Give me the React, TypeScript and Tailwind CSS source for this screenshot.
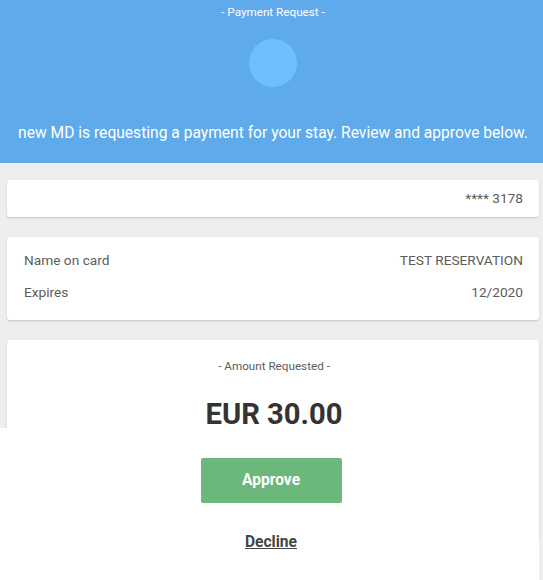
import React from "react";

export default function App() {
  return (
    <div className="relative min-h-[580px] bg-[#eeeeee] font-['Roboto',sans-serif] overflow-hidden">
      <div className="h-[163px] bg-[#5faaeb] flex flex-col items-center text-white pl-[3px]">
        <div className="pt-[5px] text-[11.7px] leading-[14px]">- Payment Request -</div>
        <div className="mt-[20px] w-[48px] h-[48px] rounded-full bg-[#6ebffc]" />
        <div className="mt-[36px] text-[15.6px] leading-[20px]">
          new MD is requesting a payment for your stay. Review and approve below.
        </div>
      </div>
      <div className="pt-[17px] ml-[7px] mr-[4px] flex flex-col gap-[20px]">
        <div className="h-[37px] bg-white rounded-[3px] shadow-[0_1px_2px_rgba(0,0,0,0.18)] flex items-center justify-end pr-[16px] text-[13.7px] text-[#5c5c5c]">
          **** 3178
        </div>
        <div className="bg-white rounded-[3px] shadow-[0_1px_2px_rgba(0,0,0,0.18)] pt-[7px] pb-[12px] pl-[17px] pr-[16px] text-[13.7px] text-[#5c5c5c]">
          <div className="flex justify-between leading-[32px]">
            <span>Name on card</span>
            <span>TEST RESERVATION</span>
          </div>
          <div className="flex justify-between leading-[32px]">
            <span>Expires</span>
            <span>12/2020</span>
          </div>
        </div>
        <div className="h-[200px] bg-white rounded-[3px] shadow-[0_1px_2px_rgba(0,0,0,0.18)] flex flex-col items-center pt-[18px] pl-[2px]">
          <div className="text-[11.7px] leading-[16px] text-[#5c5c5c]">- Amount Requested -</div>
          <div className="mt-[22px] text-[29.2px] leading-[36px] font-bold text-[#333333]">EUR 30.00</div>
        </div>
      </div>
      <div className="absolute left-0 right-[4px] top-[428px] bottom-0 bg-white flex flex-col items-center pl-[3px]">
        <button className="mt-[30px] w-[141px] h-[45px] rounded-[2px] bg-[#6cb77a] text-white text-[15.6px] font-bold">
          Approve
        </button>
        <a className="mt-[29px] text-[15.6px] leading-[20px] font-bold text-[#444444] underline">Decline</a>
      </div>
    </div>
  );
}
